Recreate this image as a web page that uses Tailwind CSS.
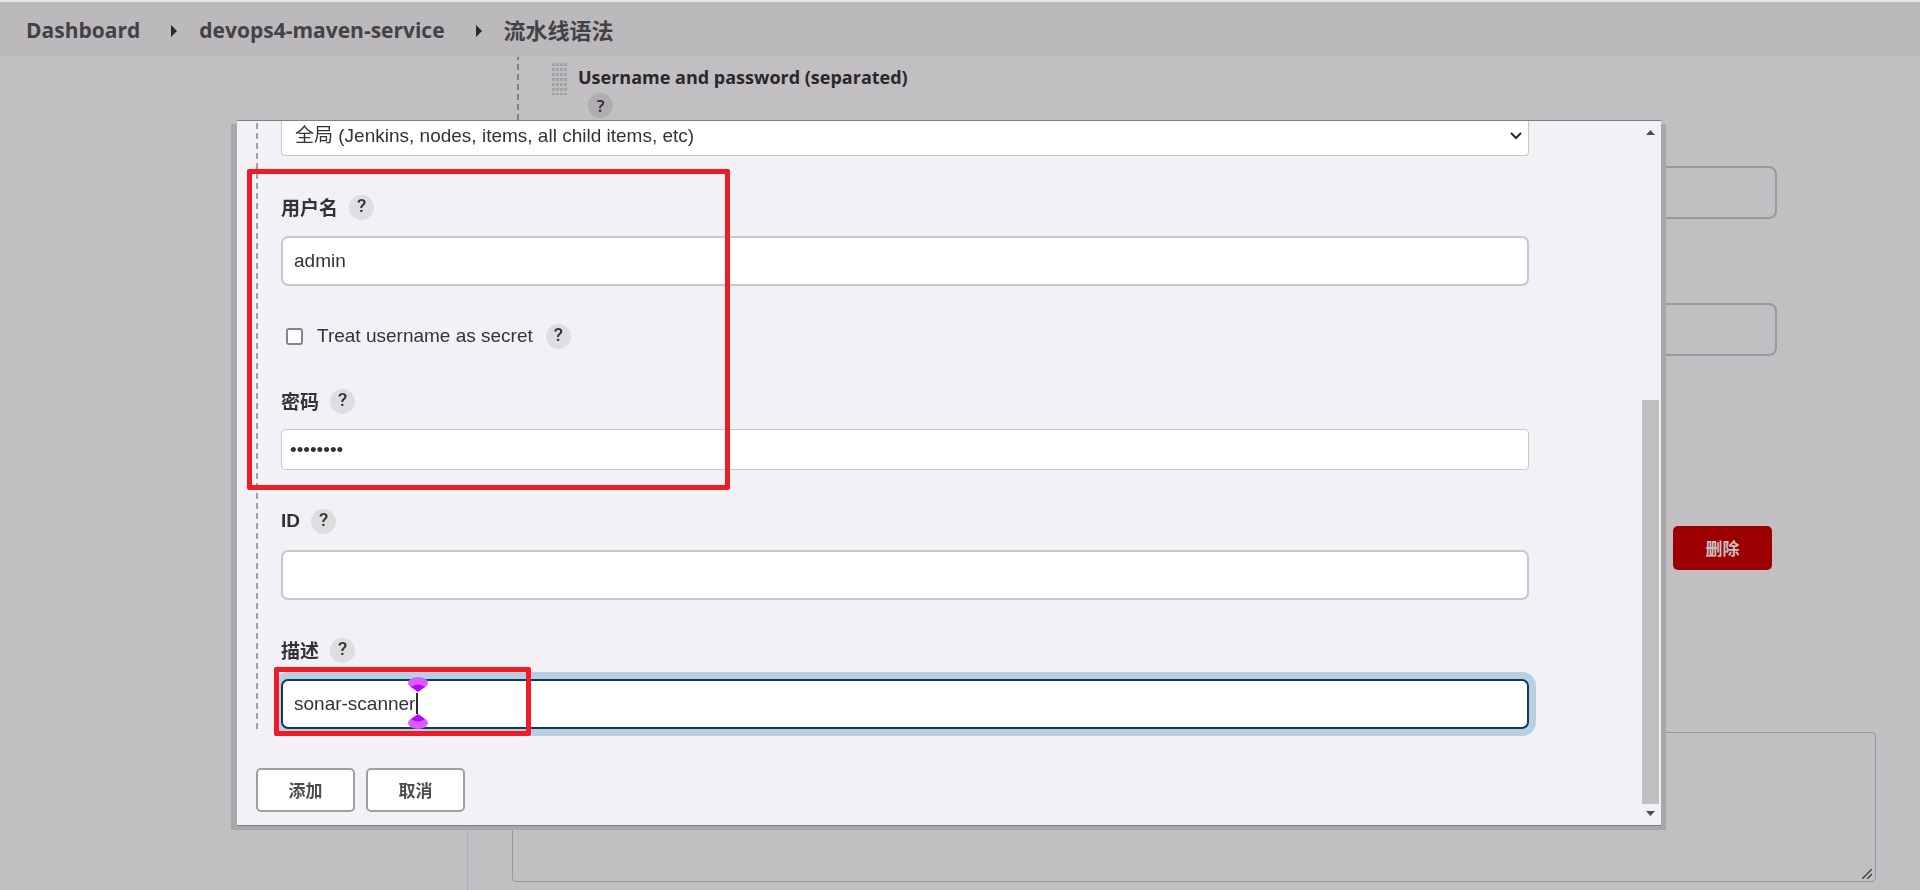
<!DOCTYPE html>
<html lang="zh-CN">
<head>
    <meta charset="UTF-8">
    <meta name="viewport" content="width=device-width, initial-scale=1.0">
    <title>流水线语法 [Jenkins]</title>
    <script src="https://cdn.jsdelivr.net/npm/@tailwindcss/browser@4"></script>
</head>

<body class="min-h-screen overflow-hidden bg-[#c1bfc2] font-['Liberation_Sans','Noto_Sans_CJK_SC',sans-serif] text-[19px] text-[#333335]">
    <div class="flex h-screen flex-col">
        <header class="flex h-[57px] shrink-0 items-center border-t-2 border-[#e4e3e5] bg-[#bbb9bc] px-[26px] pt-[2px] font-['Open_Sans','Noto_Sans_CJK_SC',sans-serif] text-[21px] font-bold text-[#434245]">
            <nav class="flex items-center">
                <a href="#">Dashboard</a>
                <svg class="ml-[31px] mr-[22px] h-3 w-[6px]" viewBox="0 0 6 12"><path d="M0 0v12l6-6z" fill="#29282a"/></svg>
                <a href="#">devops4-maven-service</a>
                <svg class="ml-[31px] mr-[22px] h-3 w-[6px]" viewBox="0 0 6 12"><path d="M0 0v12l6-6z" fill="#29282a"/></svg>
                <a href="#" class="text-[22px]">流水线语法</a>
            </nav>
        </header>

        <main class="flex min-h-0 flex-1">
            <aside class="flex w-[468px] shrink-0 flex-col justify-end">
                <div class="h-[60px] border-r border-[#b1afb3]"></div>
            </aside>
            <section class="flex flex-1 flex-col pl-[44px] pr-[44px]">
                <!-- credentials binding -->
                <div class="ml-[5px] flex h-[109px] shrink-0">
                    <div class="h-[64px] w-[2px] bg-[repeating-linear-gradient(#807e83_0_3px,transparent_3px_7px,#807e83_7px_10px)]"></div>
                    <svg class="ml-[33px] mt-[6px] h-8 w-4" viewBox="0 0 16 32">
                        <defs>
                            <pattern id="grip" width="4" height="5" patternUnits="userSpaceOnUse"><rect width="3" height="3" fill="#a3a1a5"/></pattern>
                        </defs>
                        <rect width="16" height="32" fill="url(#grip)"/>
                    </svg>
                    <div class="ml-[10px] pt-[6px] font-['Open_Sans',sans-serif] text-[#29282a]">
                        <div class="text-[18px] font-bold leading-7">Username and password (separated)</div>
                        <button type="button" class="ml-[10px] mt-[2px] flex size-[25px] items-center justify-center rounded-full bg-[#afadb0] text-[17px] font-semibold">?</button>
                    </div>
                </div>
                <input type="text" aria-label="用户名变量" class="mr-[99px] h-[53px] shrink-0 rounded-lg border-2 border-[#9a989c]">
                <input type="text" aria-label="密码变量" class="mr-[99px] mt-[84px] h-[53px] shrink-0 rounded-lg border-2 border-[#9a989c]">
                <button type="button" class="mr-[104px] mt-[170px] h-[44px] w-[99px] shrink-0 self-end rounded-[5px] bg-[#9c0000] pt-[3px] text-[17px] font-bold text-[#cdbfc1]">删除</button>
                <div class="relative mt-[162px] h-[150px] shrink-0">
                    <textarea aria-label="流水线脚本" class="block h-full w-full resize-none rounded-[4px] border border-[#97959a]"></textarea>
                    <svg class="absolute bottom-[3px] right-[4px] size-[10px]" viewBox="0 0 10 10"><path d="M0 10L10 0M5 10l5-5" stroke="#454447" stroke-width="1.5"/></svg>
                </div>
            </section>
        </main>
    </div>

    <!-- add credentials dialog -->
    <div class="fixed inset-0 pb-[64px] pl-[237px] pr-[259px] pt-[120px]">
        <div role="dialog" class="relative flex h-[706px] border-y border-[#807e83] bg-[#f3f1f5] shadow-[0_4px_0_0_#a9a7aa,5px_4px_0_0_#a9a7aa,-6px_4px_0_0_#a9a7aa]">
            <form class="flex-1 pl-[19px]">
                <div class="flex">
                    <div class="mt-[2px] w-[2px] bg-[repeating-linear-gradient(#a19fa3_0_6px,transparent_6px_10px)]"></div>
                    <div class="ml-[23px] mr-[113px] flex-1">
                        <div class="relative">
                            <select aria-label="范围" class="block h-[35px] w-full appearance-none rounded-b-[4px] border border-t-0 border-[#c9c7cb] bg-white pb-1 pl-[13px]">
                                <option>全局 (Jenkins, nodes, items, all child items, etc)</option>
                            </select>
                            <svg class="absolute right-[7px] top-[11px] h-2 w-3" viewBox="0 0 12 8" fill="none"><path d="M1 1l5 5 5-5" stroke="#29282a" stroke-width="2"/></svg>
                        </div>

                        <div class="mt-[38px] flex h-[26px] items-center">
                            <label for="username" class="pt-[4px] font-bold">用户名</label>
                            <button type="button" class="ml-[11px] flex size-[25px] items-center justify-center rounded-full bg-[#dfdde0] pb-px font-['Roboto',sans-serif] font-medium">?</button>
                        </div>
                        <input id="username" type="text" value="admin" class="mt-4 block h-[50px] w-full rounded-[7px] border-2 border-[#c9c7cb] bg-white px-[11px]">

                        <div class="mt-[37px] flex h-[26px] items-center">
                            <input id="secret" type="checkbox" class="ml-[5px] size-[17px] appearance-none rounded-[3px] border-2 border-[#86848a] bg-white">
                            <label for="secret" class="ml-[14px]">Treat username as secret</label>
                            <button type="button" class="ml-[13px] flex size-[25px] items-center justify-center rounded-full bg-[#dfdde0] pb-px font-['Roboto',sans-serif] font-medium">?</button>
                        </div>

                        <div class="mt-[39px] flex h-[26px] items-center">
                            <label for="password" class="pt-[4px] font-bold">密码</label>
                            <button type="button" class="ml-[11px] flex size-[25px] items-center justify-center rounded-full bg-[#dfdde0] pb-px font-['Roboto',sans-serif] font-medium">?</button>
                        </div>
                        <input id="password" type="password" value="password" class="mt-[15px] block h-[41px] w-full rounded-[4px] border border-[#c9c7cb] bg-white px-2">

                        <div class="mt-[38px] flex h-[26px] items-center">
                            <label for="cred-id" class="font-bold">ID</label>
                            <button type="button" class="ml-[11px] flex size-[25px] items-center justify-center rounded-full bg-[#dfdde0] pb-px font-['Roboto',sans-serif] font-medium">?</button>
                        </div>
                        <input id="cred-id" type="text" class="mt-4 block h-[50px] w-full rounded-[7px] border-2 border-[#c9c7cb] bg-white px-[11px]">

                        <div class="mt-[37px] flex h-[26px] items-center">
                            <label for="description" class="pt-[4px] font-bold">描述</label>
                            <button type="button" class="ml-[11px] flex size-[25px] items-center justify-center rounded-full bg-[#dfdde0] pb-px font-['Roboto',sans-serif] font-medium">?</button>
                        </div>
                        <div class="relative mt-4">
                            <input id="description" type="text" value="sonar-scanner" class="block h-[50px] w-full rounded-[7px] border-2 border-[#0f3a5c] bg-white px-[11px] shadow-[0_0_0_7px_#b8cee2]">
                            <!-- text cursor -->
                            <svg class="absolute left-[127px] top-[-3px] h-[56px] w-5" viewBox="0 0 20 56">
                                <ellipse cx="10" cy="7" rx="10" ry="6" fill="#d95cff"/>
                                <path d="M3 11q7-5 14 0l-7 5z" fill="#bf00ff"/>
                                <path d="M8 17h2v21h-2z" fill="#29282a"/>
                                <ellipse cx="10" cy="47" rx="10" ry="6" fill="#d95cff"/>
                                <path d="M3 43q7 5 14 0l-7-5z" fill="#bf00ff"/>
                            </svg>
                        </div>
                    </div>
                </div>
                <div class="mt-[39px] flex gap-[11px] text-[17px] font-bold text-[#4d4c50]">
                    <button type="submit" class="h-[44px] w-[99px] rounded-[5px] border-2 border-[#a09ea3] bg-white pt-[3px]">添加</button>
                    <button type="button" class="h-[44px] w-[99px] rounded-[5px] border-2 border-[#a09ea3] bg-white pt-[3px]">取消</button>
                </div>
            </form>

            <!-- scrollbar -->
            <div class="mr-[2px] flex w-[17px] flex-col items-center justify-between py-[9px]">
                <svg class="h-[5px] w-[9px]" viewBox="0 0 9 5"><path d="M0 5L4.500 0 9 5z" fill="#4d4c50"/></svg>
                <div class="mb-[7px] mt-auto h-[404px] w-full bg-[#c1bfc2]"></div>
                <svg class="h-[5px] w-[9px]" viewBox="0 0 9 5"><path d="M0 0L4.500 5 9 0z" fill="#4d4c50"/></svg>
            </div>

            <!-- highlight marks -->
            <div class="pointer-events-none absolute left-[10px] top-[48px] h-[321px] w-[483px] rounded-[2px] border-5 border-[#ee1c26]"></div>
            <div class="pointer-events-none absolute left-[37px] top-[546px] h-[69px] w-[257px] rounded-[2px] border-5 border-[#ee1c26]"></div>
        </div>
    </div>
</body>
</html>
